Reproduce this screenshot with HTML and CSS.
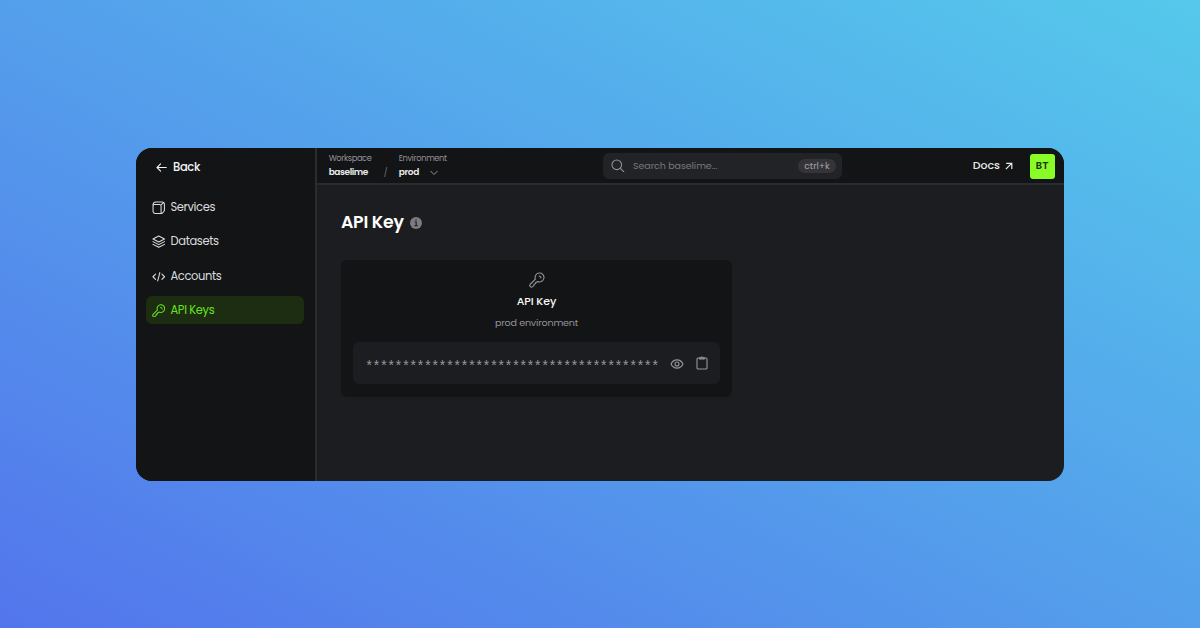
FILE: index.html
```html
<!DOCTYPE html>
<html lang="en">
<head>
<meta charset="utf-8">
<title>API Key</title>
<link rel="stylesheet" href="styles.css">
</head>
<body>
<svg class="defs" aria-hidden="true">
  <symbol id="key" viewBox="0 0 24 24"><path d="M9.600 10.700 1.900 18.400a2.550 2.550 0 0 0 3.600 3.600l1.900-1.900.3-2.100 2.200-.3.300-2.200 3.100-1.100A6.700 6.700 0 1 0 9.600 10.700z"/><path d="M15.300 6.200a2.800 2.800 0 0 1 2.600 2.600"/></symbol>
</svg>
<div class="window">
  <aside class="sidebar">
    <a class="back"><svg class="icon arrow" viewBox="0 0 12 10"><path d="M11.300 5H1M5 1 1 5l4 4"/></svg><span>Back</span></a>
    <nav class="nav">
      <a class="item"><svg class="icon" viewBox="0 0 14 14"><path d="M4 1h6.500q1 0 1.700.8.700.7.700 1.700v5.700q0 .8-.5 1.400l-1.200 1.600q-.5.700-1.400.7H3.400A2.300 2.300 0 0 1 1.100 10.600V4.100Q1.100 1 4 1z"/><path d="M1.300 4.100q.5-.5 1.300-.5h5.200a1.600 1.600 0 0 1 1.600 1.600v7.500M9.200 4.200l2.900-2.500"/></svg><span>Services</span></a>
      <a class="item"><svg class="icon" viewBox="0 0 14 14"><path d="M7 1 1 4.100 7 7.200l6-3.100zM1 6.900 7 10l6-3.100M1 9.700l6 3.100 6-3.100"/></svg><span>Datasets</span></a>
      <a class="item"><svg class="icon" viewBox="0 0 14 14"><path d="M3.700 4.300 1 7l2.700 2.700M10.300 4.300 13 7l-2.700 2.700M8.100 2.700 5.900 11.300"/></svg><span>Accounts</span></a>
      <a class="item active"><svg class="icon key"><use href="#key"/></svg><span>API Keys</span></a>
    </nav>
  </aside>
  <div class="content">
    <header class="topbar">
      <div class="crumb workspace"><small>Workspace</small><b>baselime</b></div>
      <span class="slash">/</span>
      <div class="crumb environment"><small>Environment</small><b>prod</b></div>
      <svg class="icon chevron" viewBox="0 0 8 6"><path d="m.7 1.200 3.300 3.300 3.300-3.300"/></svg>
      <div class="search">
        <svg class="icon glass" viewBox="0 0 14 14"><circle cx="6" cy="6" r="5"/><path d="m9.700 9.700 3.500 3.500"/></svg>
        <span class="placeholder">Search baselime...</span>
        <kbd>ctrl+k</kbd>
      </div>
      <a class="docs"><span>Docs</span><svg class="icon" viewBox="0 0 8 8"><path d="M1.300 6.700 6.600 1.400M1.800 1.300h5v5"/></svg></a>
      <div class="avatar">BT</div>
    </header>
    <main class="main">
      <h1><span>API Key</span><svg class="info" viewBox="0 0 12 12"><circle cx="6" cy="6" r="6"/><path d="M4.700 5h1.500v3.600M4.500 8.600h3.200M6 2.400v1.300"/></svg></h1>
      <section class="card">
        <svg class="icon key card-key"><use href="#key"/></svg>
        <h2>API Key</h2>
        <p>prod environment</p>
        <div class="secret">
          <span class="stars">****************************************</span>
          <svg class="icon eye" viewBox="0 0 14 10"><path d="M1 5c1.300-2.700 3.400-4.100 6-4.100S11.700 2.300 13 5c-1.300 2.700-3.400 4.100-6 4.100S2.300 7.700 1 5z"/><circle cx="7" cy="5" r="2"/></svg>
          <svg class="icon clip" viewBox="0 0 12 14"><path d="M3.700 2H2a1 1 0 0 0-1 1v9a1 1 0 0 0 1 1h8a1 1 0 0 0 1-1V3a1 1 0 0 0-1-1H8.300"/><path d="M3.700 2.900V1.700h1.200a1.200 1.200 0 0 1 2.200 0h1.200v1.200z"/></svg>
        </div>
      </section>
    </main>
  </div>
</div>
</body>
</html>
```
FILE: styles.css
```css
* { box-sizing: border-box; }
body {
  margin: 0;
  height: 628px;
  padding: 148px 136px 147px;
  background: linear-gradient(to top right, #5375ec, #55c9eb);
  font-family: Poppins, Inter, "Liberation Sans", sans-serif;
  color: #dcdcde;
  overflow: hidden;
  white-space: nowrap;
}
.defs { position: absolute; width: 0; height: 0; }
.icon { fill: none; stroke: currentColor; stroke-width: 1.100; stroke-linecap: round; stroke-linejoin: round; flex: none; display: block; }
.key { stroke-width: 1.8; }
.window { display: flex; height: 333px; border-radius: 16px; overflow: hidden; background: #1c1d20; }
.sidebar { width: 181px; flex: none; background: #131416; border-right: 2px solid #2b2c2f; }
.back { display: flex; align-items: center; height: 38px; padding-left: 20px; gap: 6px; font-size: 11.500px; font-weight: 500; color: #f2f2f3; letter-spacing: -.35px; }
.back span { padding-top: 1px; }
.arrow { width: 11px; height: 9px; stroke-width: 1.200; margin-top: 1px; }
.nav { display: flex; flex-direction: column; gap: 6.400px; padding: 7px 11.500px 0 10px; }
.item { display: flex; align-items: center; height: 28px; padding-left: 5.500px; gap: 5.500px; border-radius: 6px; font-size: 11.500px; letter-spacing: -.38px; }
.item .icon { width: 13.500px; height: 13.500px; margin-top: 1px; }
.item span { padding-top: 1px; }
.item.active { background: #1d2d12; color: #65e41e; }
.content { flex: 1; min-width: 0; }
.topbar { display: flex; align-items: center; height: 37px; padding-right: 9px; background: #131416; border-bottom: 2px solid #2b2c2f; }
.crumb { display: flex; flex-direction: column; }
.crumb small { font-size: 8.300px; line-height: 14px; color: #929297; letter-spacing: -.42px; }
.crumb b { font-size: 9px; line-height: 15px; font-weight: 600; color: #ececee; letter-spacing: -.42px; }
.workspace { width: 55px; margin: 0 0 0 11.700px; }
.slash { width: 15px; padding-top: 15px; font-size: 8px; color: #77777c; }
.environment { width: 31.300px; }
.environment b { letter-spacing: -.3px; }
.environment small { letter-spacing: -.36px; }
.chevron { width: 8px; height: 6px; margin-top: 15px; color: #929297; stroke-width: 1; }
.search { display: flex; align-items: center; width: 239px; height: 26px; margin-left: 165px; padding: 0 6px 0 8.500px; border-radius: 6px; background: #222326; color: #77787c; }
.glass { width: 13.500px; height: 13.500px; color: #929297; }
.placeholder { flex: 1; margin-left: 8px; padding-top: 1px; font-size: 9.500px; letter-spacing: -.08px; }
kbd { width: 38px; height: 14px; border-radius: 7px; background: #353539; color: #a1a1a7; font: 9.300px/14px Poppins, Inter, sans-serif; letter-spacing: -.1px; text-align: center; }
.docs { display: flex; align-items: center; gap: 5px; margin-left: auto; font-size: 11px; font-weight: 500; color: #e9e9eb; }
.docs .icon { width: 8px; height: 8px; stroke-width: 1.200; stroke-linecap: square; stroke-linejoin: miter; margin-top: 1px; }
.avatar { width: 25px; height: 25px; margin: 1px 0 0 17px; border-radius: 3px; background: #89fc28; color: #20340f; font: 700 9.500px/24px Inter, sans-serif; letter-spacing: .6px; text-align: center; }
.main { padding: 24px 24px; }
h1 { display: flex; align-items: center; gap: 6px; height: 26px; margin: 0; font-size: 17.300px; font-weight: 600; letter-spacing: -.25px; color: #fff; }
.info { width: 12px; height: 12px; margin-top: 1px; fill: #7b7b80; }
.info path { fill: none; stroke: #242529; stroke-width: 1.200; }
.card { display: flex; flex-direction: column; align-items: center; width: 391px; height: 137px; margin-top: 25px; padding: 12px; border-radius: 6px; background: #131416; }
.card-key { width: 16px; height: 16px; color: #929296; stroke-width: 1.700; }
h2 { margin: 4px 0 0; font-size: 11px; line-height: 18px; font-weight: 500; letter-spacing: -.08px; color: #fafafa; }
p { margin: 4px 0 0; font-size: 9.600px; line-height: 17px; letter-spacing: -.2px; color: #929297; }
.secret { display: flex; align-items: center; align-self: stretch; height: 42px; margin-top: 11px; padding: 0 12px 0 12px; border-radius: 6px; background: #1c1d20; color: #97979c; }
.stars { flex: none; width: 305px; padding-top: 8px; font-family: "Liberation Mono", monospace; font-size: 14px; letter-spacing: -1.070px; }
.eye { width: 14px; height: 10px; margin-top: 1px; }
.clip { width: 12px; height: 14px; margin: 0 0 0 11.500px; }
```
